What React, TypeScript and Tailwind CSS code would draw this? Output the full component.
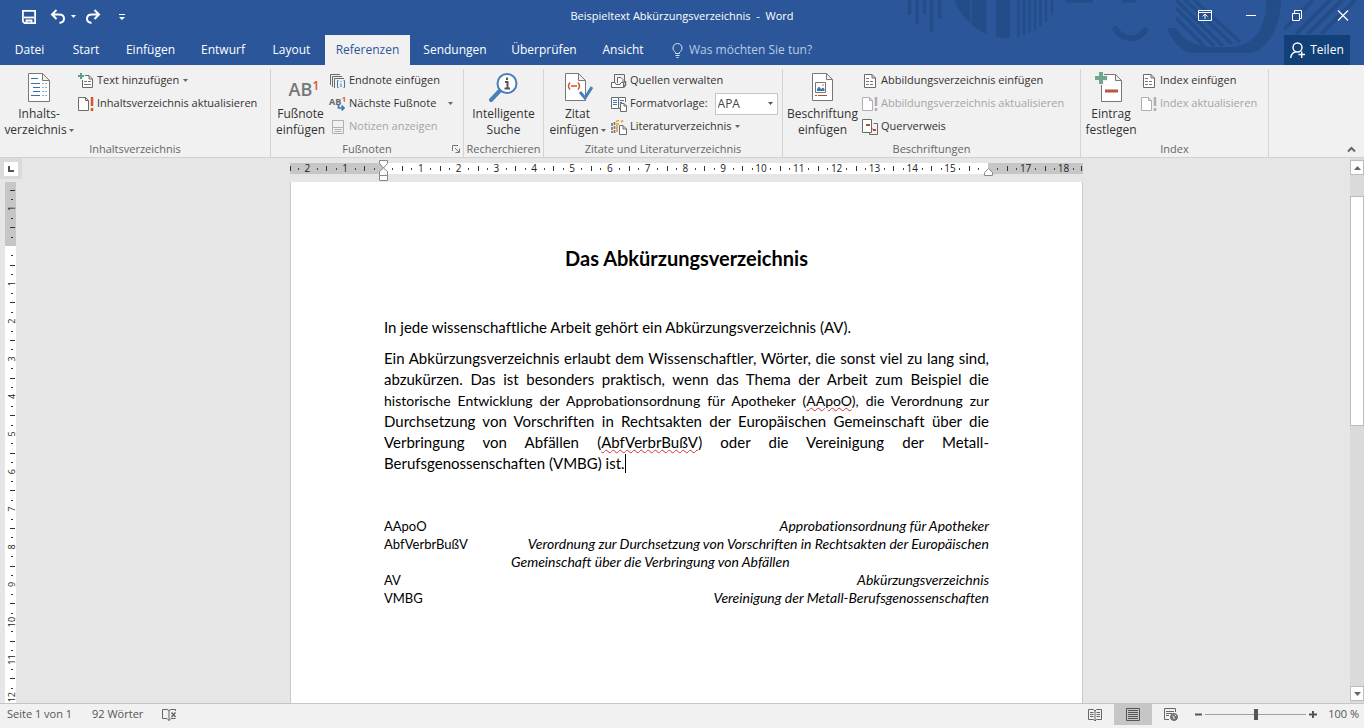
import type { ReactNode } from "react";
import clsx from "clsx";

const CM_X = 37.8;
const CM_Y = 37.6;

const tabs = [
  { title: "Datei", width: "w-[59px]" },
  { title: "Start", width: "w-[54px]" },
  { title: "Einfügen", width: "w-[75px]" },
  { title: "Entwurf", width: "w-[70px]" },
  { title: "Layout", width: "w-[67px]" },
  { title: "Referenzen", width: "w-[85px]", active: true },
  { title: "Sendungen", width: "w-[90px]" },
  { title: "Überprüfen", width: "w-[88px]" },
  { title: "Ansicht", width: "w-[70px]" },
];

const App = () => {
  return (
    <div className="flex h-screen flex-col overflow-hidden bg-[#e6e6e6] font-['Open_Sans','Noto_Sans',sans-serif] text-[11px] text-[#333]">
      <header className="relative shrink-0 bg-[#2b579a] text-white">
        <HeaderPattern />
        <TitleBar />
        <TabBar />
      </header>
      <Ribbon />
      <Workspace />
      <StatusBar />
    </div>
  );
};

const HeaderPattern = () => {
  return (
    <svg
      className="absolute top-0 right-0"
      width="484"
      height="65"
      viewBox="0 0 484 65"
      fill="none"
      stroke="#234d88"
      aria-hidden="true"
    >
      <g strokeWidth="3.5">
        <path d="M29.500 0V15M37 0V24M44.500 0V14M51.500 0V32M59.500 0V19" />
      </g>
      <clipPath id="disc">
        <path d="M74 0H179C174 20 152 38 127 38S84 22 74 0Z" />
      </clipPath>
      <g clipPath="url(#disc)">
        <path d="M82 0V40" strokeWidth="16" />
        <path d="M99 0V40" strokeWidth="15" />
        <path d="M123 0V40" strokeWidth="14" />
        <path
          d="M138.500 0V40M144 0V40M149.500 0V40M155 0V40M160.500 0V40M166 0V40M172 0V40"
          strokeWidth="2.500"
        />
      </g>
      <path d="M185 1H213M242 1H256" strokeWidth="3" />
      <path d="M234 27C243 42 258 42 267 28" strokeWidth="6" />
      <path d="M296 0V28H287C292 42 302 52 313 53H370C388 50 401 25 401 0H386C387 25 376 44 353 47L304 0Z" fill="#234d88" stroke="none" />
      <path d="M296 0V28C306 44 320 47 334 47H354L304 0Z" fill="#2b579a" stroke="none" />
      <path d="M296 8L334 46M296 0L343 46M305 0L352 44M314 0L360 42M296 18L324 46" strokeWidth="3.500" />
      <path d="M404 29L433 0M416 34L450 0M428 34L462 0M441 34L475 0" strokeWidth="4" />
    </svg>
  );
};

const TitleBar = () => {
  return (
    <div className="relative flex h-[35px] items-center justify-center">
      <span className="pb-[2px] text-[11px]">Beispieltext Abkürzungsverzeichnis&nbsp; -&nbsp; Word</span>
      <div className="absolute inset-y-0 left-[21px] flex items-center pb-[2px]">
        <button aria-label="Speichern">
          <svg width="16" height="16" viewBox="0 0 16 16" fill="none" stroke="#fff" strokeWidth="1.800">
            <path d="M1.900 1.900H14.100V14.100H3.500L1.900 12.500Z" />
            <path d="M3 8.500H13" />
            <path d="M5.500 14V11.500H10.500V14" />
          </svg>
        </button>
        <button aria-label="Rückgängig" className="ml-[13px] flex items-center gap-[5px]">
          <svg width="16" height="16" viewBox="0 0 16 16" fill="none" stroke="#fff" strokeWidth="2">
            <path d="M6.500 1L2 5.500L6.500 10M2.500 5.500H9C12.500 5.500 14 7.500 14 9.700C14 12 12.300 13.500 9.500 14" />
          </svg>
          <Caret className="text-white" />
        </button>
        <button aria-label="Wiederholen" className="ml-[9px]">
          <svg width="16" height="16" viewBox="0 0 16 16" fill="none" stroke="#fff" strokeWidth="2">
            <path d="M9.500 1L14 5.500L9.500 10M13.500 5.500H7C3.500 5.500 2 7.500 2 9.700C2 12 3.700 13.500 6.500 14" />
          </svg>
        </button>
        <button aria-label="Symbolleiste anpassen" className="ml-[17px]">
          <svg width="8" height="8" viewBox="0 0 8 8" fill="#fff">
            <path d="M1 1H7V2H1ZM1 4H7L4 7Z" />
          </svg>
        </button>
      </div>
      <div className="absolute inset-y-0 right-[14px] flex items-center gap-[32px] pb-[5px]">
        <button aria-label="Menüband-Anzeigeoptionen">
          <svg width="14" height="11" viewBox="0 0 14 11" fill="none" stroke="#fff">
            <path d="M.5.5H13.500V10.500H.5ZM.5 2.500H13.500M7 9V4M4.500 6.500L7 4L9.500 6.500" />
          </svg>
        </button>
        <button aria-label="Minimieren">
          <svg width="14" height="11" viewBox="0 0 14 11" stroke="#fff">
            <path d="M2 5.500H12" />
          </svg>
        </button>
        <button aria-label="Verkleinern">
          <svg width="14" height="11" viewBox="0 0 14 11" fill="none" stroke="#fff">
            <path d="M2.500 3.500H9.500V10.500H2.500ZM4.500 3.500V.5H11.500V8.500H9.500" />
          </svg>
        </button>
        <button aria-label="Schließen">
          <svg width="14" height="11" viewBox="0 0 14 11" stroke="#fff" strokeWidth="1.200">
            <path d="M2 .5L12 10.500M12 .5L2 10.500" />
          </svg>
        </button>
      </div>
    </div>
  );
};

const TabBar = () => {
  return (
    <div className="relative flex h-[30px] items-stretch pr-[14px]">
      <nav className="flex">
        {tabs.map(({ title, width, active }) => (
          <button
            key={title}
            className={clsx(
              "flex shrink-0 items-center justify-center text-[12px]",
              width,
              active && "bg-[#f1f1f1] text-[#2b579a]",
            )}
          >
            {title}
          </button>
        ))}
      </nav>
      <label className="ml-[13px] flex items-center gap-[5px]">
        <svg width="13" height="15" viewBox="0 0 13 15" fill="none" stroke="#dce5f3">
          <path d="M4.500 10.500V9.500C3 8 2 7 2 5A4.500 4.500 0 0 1 11 5C11 7 10 8 8.500 9.500V10.500ZM4.500 12.500H8.500M5.500 14.500H7.500" />
        </svg>
        <input
          type="text"
          aria-label="Was möchten Sie tun?"
          placeholder="Was möchten Sie tun?"
          className="w-[150px] bg-transparent text-[12px] outline-none placeholder:text-[#bccae2]"
        />
      </label>
      <button className="ml-auto flex w-[66px] items-center justify-center gap-[5px] bg-[#124078] text-[12px]">
        <svg width="15" height="17" viewBox="0 0 15 17" fill="none" stroke="#fff" strokeWidth="1.400">
          <circle cx="7.500" cy="5.500" r="4.500" />
          <path d="M.7 16C1 12.500 3 10.500 5.500 10M8.500 12.500H15M11.700 9.500V16" />
        </svg>
        Teilen
      </button>
    </div>
  );
};

const Caret = ({ className }: { className?: string }) => (
  <svg className={clsx("inline-block shrink-0", className)} width="5" height="3" viewBox="0 0 5 3" fill="currentColor">
    <path d="M0 0H5L2.500 3Z" />
  </svg>
);

const ScrollArrow = ({ className }: { className?: string }) => (
  <svg className={className} width="7" height="4" viewBox="0 0 7 4" fill="#666">
    <path d="M0 0H7L3.500 4Z" />
  </svg>
);

type GroupProps = {
  title: string;
  width: string;
  launcher?: boolean;
  children: ReactNode;
};

const Group = ({ title, width, launcher, children }: GroupProps) => {
  return (
    <section className={clsx("flex shrink-0 flex-col border-r border-[#d4d4d4]", width)}>
      <div className="flex h-[72px]">{children}</div>
      <div className="relative flex h-[16px] items-center justify-center whitespace-nowrap text-[#666]">
        <h2>{title}</h2>
        {launcher && (
          <button aria-label="Fußnoten-Optionen" className="absolute right-[3px]">
            <svg width="8" height="8" viewBox="0 0 8 8" fill="none" stroke="#777">
              <path d="M.5 6V.5H6M3 3L7 7M7.500 3.500V7.500H3.500" />
            </svg>
          </button>
        )}
      </div>
    </section>
  );
};

type BigButtonProps = {
  icon: ReactNode;
  lines: [string, string];
  width: string;
  caret?: boolean;
};

const BigButton = ({ icon, lines, width, caret }: BigButtonProps) => {
  return (
    <button className={clsx("flex shrink-0 flex-col items-center text-[12px] leading-[16px] whitespace-nowrap", width)}>
      <span className="flex h-[37px] items-center">{icon}</span>
      <span>{lines[0]}</span>
      <span className="flex items-center gap-[2px]">
        {lines[1]}
        {caret && <Caret className="text-[#666]" />}
      </span>
    </button>
  );
};

type SmallButtonProps = {
  icon: ReactNode;
  text: string;
  caret?: boolean;
  spacedCaret?: boolean;
  disabled?: boolean;
};

const SmallButton = ({ icon, text, caret, spacedCaret, disabled }: SmallButtonProps) => {
  return (
    <button disabled={disabled} className={clsx("flex h-[23px] items-center whitespace-nowrap", disabled && "text-[#a5a5a5]")}>
      <span className="mr-[3px] flex w-[16px] shrink-0 justify-center">{icon}</span>
      {text}
      {caret && <Caret className={clsx("text-[#666]", spacedCaret ? "ml-[12px]" : "ml-[4px]")} />}
    </button>
  );
};

const Column = ({ children }: { children: ReactNode }) => (
  <div className="flex flex-col items-start">{children}</div>
);

const SmallIcon = ({ children }: { children: ReactNode }) => (
  <svg width="16" height="16" viewBox="0 0 16 16" fill="none" stroke="#6a6a6a">
    {children}
  </svg>
);

const UpdateIcon = ({ color = "#6a6a6a", accent = "#d9532c" }) => (
  <SmallIcon>
    <path d="M.5 1.500H7.500L10.500 4.500V14.500H.5ZM7.500 1.500V4.500H10.500" fill="#fff" stroke={color} />
    <path d="M14 1V10M14 12V15" stroke={accent} strokeWidth="2.500" />
  </SmallIcon>
);

const ListPageIcon = () => (
  <SmallIcon>
    <path d="M2.500 1.500H10L13.500 5V14.500H2.500ZM10 1.500V5H13.500" fill="#fff" />
    <path d="M4 5.500H8M4 8.500H12M4 11.500H12" stroke="#777" strokeDasharray="3 1" />
  </SmallIcon>
);

const Ribbon = () => {
  return (
    <div className="flex h-[93px] shrink-0 border-b border-[#d2d2d2] bg-[#f1f1f1] pt-[4px]">
      <Group title="Inhaltsverzeichnis" width="w-[271px]">
        <BigButton
          width="w-[78px]"
          lines={["Inhalts-", "verzeichnis"]}
          caret
          icon={
            <svg width="22" height="29" viewBox="0 0 22 29" fill="none" stroke="#777">
              <path d="M.5.5H14.500L21.500 7.500V28.500H.5ZM14.500.5V7.500H21.500" fill="#fff" />
              <path d="M3 5.500H10M3 10.500H12M5 14.500H12M5 18.500H12M3 22.500H12" stroke="#3a6ea5" />
              <path d="M14 10.500H19M14 14.500H19M14 18.500H19M14 22.500H19" stroke="#8fb0d0" strokeDasharray="2 1" />
            </svg>
          }
        />
        <Column>
          <SmallButton
            text="Text hinzufügen"
            caret
            icon={
              <SmallIcon>
                <path d="M4.500 7V14.500H14.500V6L11 2.500H7M11 2.500V6H14.500" fill="#fff" />
                <path d="M6 8.500H9M10 8.500H13M6 11.500H13" stroke="#777" />
                <path d="M3 0V6M0 3H6" stroke="#5aa182" strokeWidth="2" />
              </SmallIcon>
            }
          />
          <SmallButton text="Inhaltsverzeichnis aktualisieren" icon={<UpdateIcon />} />
        </Column>
      </Group>

      <Group title="Fußnoten" width="w-[193px]" launcher>
        <BigButton
          width="w-[59px]"
          lines={["Fußnote", "einfügen"]}
          icon={
            <span className="relative pt-[3px] text-[18px] font-semibold text-[#777]">
              AB
              <sup className="absolute -right-[7px] top-[2px] text-[12px] leading-none text-[#d9532c]">1</sup>
            </span>
          }
        />
        <Column>
          <SmallButton
            text="Endnote einfügen"
            icon={
              <SmallIcon>
                <path d="M.5 12V1.500H10M2.500 14V3.500H12M4.500 15V5.500H14" />
                <path d="M8.500 7.500H7.500V14.500H8.500M13.500 7.500H14.500V14.500H13.500M11 8V9M11 10.500V14" stroke="#3a78b5" />
              </SmallIcon>
            }
          />
          <SmallButton
            text="Nächste Fußnote"
            caret
            spacedCaret
            icon={
              <svg width="16" height="16" viewBox="0 0 16 16" fill="none" className="overflow-visible">
                <text x="-1" y="9" fontSize="9" fontWeight="700" fill="#666">AB</text>
                <text x="12" y="6" fontSize="7" fontWeight="700" fill="#d9532c">1</text>
                <path d="M8.500 9V12H14M11.500 9.500L14 12L11.500 14.500" stroke="#3a78b5" strokeWidth="1.700" />
              </svg>
            }
          />
          <SmallButton
            text="Notizen anzeigen"
            disabled
            icon={
              <SmallIcon>
                <path d="M2.500 1.500H13.500V14.500H2.500ZM2.500 8.500H13.500M4.500 10.500H11.500M4.500 12.500H11.500" stroke="#b5adb5" />
              </SmallIcon>
            }
          />
        </Column>
      </Group>

      <Group title="Recherchieren" width="w-[80px]">
        <BigButton
          width="w-full"
          lines={["Intelligente", "Suche"]}
          icon={
            <svg width="29" height="29" viewBox="0 0 29 29" fill="none" stroke="#4a7ebb">
              <path d="M2 27L11 17.500" strokeWidth="4" strokeLinecap="round" />
              <circle cx="18" cy="10.500" r="9.500" fill="#fff" strokeWidth="2" />
              <path d="M16 9H18.500V15M15.500 15.500H21M18 4.500V7" stroke="#555" strokeWidth="2" />
            </svg>
          }
        />
      </Group>

      <Group title="Zitate und Literaturverzeichnis" width="w-[239px]">
        <BigButton
          width="w-[67px]"
          lines={["Zitat", "einfügen"]}
          caret
          icon={
            <svg width="28" height="29" viewBox="0 0 28 29" fill="none" stroke="#777" className="ml-[3px]">
              <path d="M.5.5H13.500L20.500 7.500V27.500H.5ZM13.500.5V7.500H20.500" fill="#fff" />
              <path d="M5 9.500Q2 13 5 16.500M13 9.500Q16 13 13 16.500M6 13H12" stroke="#d05a28" strokeWidth="1.500" />
              <path d="M15 19L20 25L27 14" stroke="#4a7ebb" strokeWidth="3" />
            </svg>
          }
        />
        <Column>
          <SmallButton
            text="Quellen verwalten"
            icon={
              <SmallIcon>
                <path d="M3.500 9.500V1.500H13.500V9.500" />
                <path d="M6.500 10V4.500H10L12 6.500V10" fill="#fff" />
                <path d="M.5 9.500H4L5 11.500H9L10 9.500H12.500V14.500H.5Z" fill="#fff" />
                <path d="M14.500 8V12L12.500 14.500" strokeWidth="1.500" />
              </SmallIcon>
            }
          />
          <div className="flex h-[23px] items-center">
            <span className="mr-[3px]">
              <SmallIcon>
                <path d="M.5 1.500H7.500V12.500H.5ZM7.500 1.500H14.500V6M7.500 12.500H9" fill="#fff" />
                <path d="M2 4.500H6M2 6.500H6M2 8.500H6M9 4.500H13M9 6.500H11" stroke="#3a78b5" />
                <path d="M9.500 7.500H13L15.500 10V15.500H9.500ZM13 7.500V10H15.500" fill="#fff" />
              </SmallIcon>
            </span>
            <label htmlFor="citation-style">Formatvorlage:</label>
            <span className="relative ml-[7px] flex">
              <select
                id="citation-style"
                className="h-[22px] w-[63px] appearance-none border border-[#c6c6c6] bg-white pl-[2px] text-[12px] text-[#444]"
              >
                <option>APA</option>
              </select>
              <Caret className="pointer-events-none absolute top-[9px] right-[5px] text-[#555]" />
            </span>
          </div>
          <SmallButton
            text="Literaturverzeichnis"
            caret
            icon={
              <SmallIcon>
                <path d="M1 4V14M3.500 3V14" stroke="#777" strokeWidth="1.700" strokeDasharray="3 1" />
                <path d="M5 2.500L8 1.500M5 5H8M10 3L12 1.500M6 6V13" stroke="#e0a33c" strokeWidth="1.700" />
                <path d="M8.500 6.500H12L15.500 10V15.500H8.500ZM12 6.500V10H15.500" fill="#fff" />
              </SmallIcon>
            }
          />
        </Column>
      </Group>

      <Group title="Beschriftungen" width="w-[298px]">
        <BigButton
          width="w-[79px]"
          lines={["Beschriftung", "einfügen"]}
          icon={
            <svg width="22" height="29" viewBox="0 0 22 29" fill="none" stroke="#777">
              <path d="M.5.5H14.500L20.500 6.500V27.500H.5ZM14.500.5V6.500H20.500" fill="#fff" />
              <path d="M3.500 9.500H13.500V19.500H3.500Z" />
              <path d="M5 18V16L7 13.500L9 16L11 14.500L12.500 16V18Z" fill="#3a78b5" stroke="none" />
              <circle cx="11" cy="12" r="1" fill="#e0a33c" stroke="none" />
              <path d="M3 22.500H5M6 22.500H15" stroke="#b5482b" />
            </svg>
          }
        />
        <Column>
          <SmallButton text="Abbildungsverzeichnis einfügen" icon={<ListPageIcon />} />
          <SmallButton
            text="Abbildungsverzeichnis aktualisieren"
            disabled
            icon={<UpdateIcon color="#b5adb5" accent="#b5adb5" />}
          />
          <SmallButton
            text="Querverweis"
            icon={
              <SmallIcon>
                <path d="M.5.5H9.500V13.500H.5Z" fill="#fff" />
                <path d="M11.500 4.500H15.500V15.500H7.500V13.500M9.500 10H11" />
                <path d="M4 6H8M11 11H14" stroke="#c0492b" strokeWidth="2" />
              </SmallIcon>
            }
          />
        </Column>
      </Group>

      <Group title="Index" width="w-[188px]">
        <BigButton
          width="w-[60px]"
          lines={["Eintrag", "festlegen"]}
          icon={
            <svg width="34" height="31" viewBox="0 0 34 31" fill="none" stroke="#777">
              <path d="M7.500 2.500H21.500L27.500 8.500V29.500H7.500ZM21.500 2.500V8.500H27.500" fill="#fff" />
              <path d="M11 19H24" stroke="#b9573a" strokeWidth="3" />
              <path d="M7 0V13M0 6.500H14" stroke="#f1f1f1" strokeWidth="6" />
              <path d="M7 0V12M1 6H13" stroke="#6ea78b" strokeWidth="4" />
            </svg>
          }
        />
        <Column>
          <SmallButton text="Index einfügen" icon={<ListPageIcon />} />
          <SmallButton text="Index aktualisieren" disabled icon={<UpdateIcon color="#b5adb5" accent="#b5adb5" />} />
        </Column>
      </Group>

      <button aria-label="Menüband reduzieren" className="mt-auto mr-[8px] mb-[4px] ml-auto">
        <svg width="9" height="7" viewBox="0 0 9 7" fill="none" stroke="#666" strokeWidth="2">
          <path d="M1 5.500L4.500 2L8 5.500" />
        </svg>
      </button>
    </div>
  );
};

// Quarter-centimetre steps between two ruler positions, zero sits on the margin.
const quarters = (from: number, to: number) =>
  Array.from({ length: to - from + 1 }, (_, i) => from + i).filter((q) => q !== 0);

const HorizontalRuler = () => {
  return (
    <svg className="mx-auto block" width="793" height="22" viewBox="0 0 793 22">
      <rect y="3" width="793" height="11" fill="#c6c6c6" />
      <rect x="93" y="3" width="605" height="11" fill="#fff" />
      {quarters(-9, 73).map((q) => {
        const x = 93 + (q * CM_X) / 4;
        if (q % 4 === 0) {
          if (q === 64) return null;
          return (
            <text key={q} x={x} y="12" fontSize="10" textAnchor="middle" fill="#222">
              {Math.abs(q / 4)}
            </text>
          );
        }
        return q % 2 === 0 ? (
          <rect key={q} x={Math.round(x)} y="6" width="1" height="5" fill="#333" />
        ) : (
          <rect key={q} x={Math.round(x)} y="8" width="1" height="2" fill="#444" />
        );
      })}
      <path d="M.5 6V11M791.500 6V11" stroke="#333" />
      <g fill="#fff" stroke="#888">
        <path d="M89.500.5H97.500V3.500L93.500 8L89.500 3.500ZM93.500 8L97.500 11.500V15.500H89.500V11.500ZM89.500 15.500H97.500V20.500H89.500Z" />
        <path d="M698.500 8.500L702.500 12.500V15.500H694.500V12.500Z" />
      </g>
    </svg>
  );
};

const VerticalRuler = () => {
  return (
    <svg className="ml-[5px] block" width="18" height="521" viewBox="0 0 18 521">
      <rect width="11" height="64" fill="#c6c6c6" />
      <rect y="64" width="11" height="457" fill="#fff" />
      {quarters(-6, 48).map((q) => {
        const y = 64 + (q * CM_Y) / 4;
        if (q % 4 === 0) {
          return (
            <text
              key={q}
              fontSize="9"
              textAnchor="middle"
              fill="#222"
              transform={`translate(10 ${y}) rotate(-90)`}
            >
              {Math.abs(q / 4)}
            </text>
          );
        }
        return q % 2 === 0 ? (
          <rect key={q} x="5" y={Math.round(y)} width="5" height="1" fill="#333" />
        ) : (
          <rect key={q} x="6" y={Math.round(y)} width="2" height="1" fill="#333" />
        );
      })}
    </svg>
  );
};

const Workspace = () => {
  return (
    <div className="flex min-h-0 flex-1">
      <aside className="w-[23px] shrink-0 overflow-hidden">
        <div className="mb-[3px] flex h-[21px] w-[22px] items-center justify-center bg-[#dadada]">
          <button aria-label="Tabstopp links" className="flex size-[14px] items-center justify-center bg-white">
            <svg width="6" height="6" viewBox="0 0 6 6" fill="none" stroke="#555" strokeWidth="2">
              <path d="M1 0V5H6" />
            </svg>
          </button>
        </div>
        <VerticalRuler />
      </aside>
      <main className="flex min-w-0 flex-1 flex-col overflow-hidden pt-[2px]">
        <HorizontalRuler />
        <Page />
      </main>
      <ScrollBar />
    </div>
  );
};

const ScrollBar = () => {
  return (
    <div className="flex w-[14px] shrink-0 flex-col bg-[#dadada] pt-[2px] pb-[2px]">
      <button aria-label="Nach oben" className="flex h-[15px] items-center justify-center border border-[#bbb] bg-white">
        <ScrollArrow className="rotate-180" />
      </button>
      <div className="flex-1 pt-[21px]">
        <div className="h-[230px] border border-[#bbb] bg-white" />
      </div>
      <button aria-label="Nach unten" className="flex h-[15px] items-center justify-center border border-[#bbb] bg-white">
        <ScrollArrow />
      </button>
    </div>
  );
};

const Misspelled = ({ children }: { children: ReactNode }) => (
  <span className="underline decoration-[#d03438] decoration-wavy decoration-1 underline-offset-1">{children}</span>
);

const Line = ({ tight, children }: { tight?: boolean; children: ReactNode }) => (
  <span className={clsx("block whitespace-nowrap [text-align-last:justify]", tight && "text-[14px]")}>{children}</span>
);

const Page = () => {
  return (
    <article className="mx-auto w-[793px] flex-1 overflow-hidden border-x border-[#c8c8c8] bg-white px-[93px] pt-[64px] font-[Lato,sans-serif] text-[15px] leading-[21px] text-black [font-variant-ligatures:none]">
      <h1 className="text-center text-[20px] leading-[24px] font-bold">Das Abkürzungsverzeichnis</h1>
      <p className="mt-[47px]">In jede wissenschaftliche Arbeit gehört ein Abkürzungsverzeichnis (AV).</p>
      <p className="mt-[10px]">
        <Line>Ein Abkürzungsverzeichnis erlaubt dem Wissenschaftler, Wörter, die sonst viel zu lang sind,</Line>
        <Line>abzukürzen. Das ist besonders praktisch, wenn das Thema der Arbeit zum Beispiel die</Line>
        <Line tight>
          historische Entwicklung der Approbationsordnung für Apotheker (<Misspelled>AApoO</Misspelled>), die Verordnung zur
        </Line>
        <Line>Durchsetzung von Vorschriften in Rechtsakten der Europäischen Gemeinschaft über die</Line>
        <Line>
          Verbringung von Abfällen (<Misspelled>AbfVerbrBußV</Misspelled>) oder die Vereinigung der Metall-
        </Line>
        <span className="flex items-center">
          Berufsgenossenschaften (VMBG) ist.
          <span className="h-[19px] w-px bg-black" />
        </span>
      </p>
      <dl className="mt-[43px] grid grid-cols-[127px_1fr] leading-[18px] whitespace-nowrap [&>dd]:text-right [&>dd]:text-[14px] [&>dd]:italic [&>dt]:text-[13px]">
        <dt>AApoO</dt>
        <dd>Approbationsordnung für Apotheker</dd>
        <dt>AbfVerbrBußV</dt>
        <dd>
          Verordnung zur Durchsetzung von Vorschriften in Rechtsakten der Europäischen
          <span className="block text-left">Gemeinschaft über die Verbringung von Abfällen</span>
        </dd>
        <dt>AV</dt>
        <dd>Abkürzungsverzeichnis</dd>
        <dt>VMBG</dt>
        <dd>Vereinigung der Metall-Berufsgenossenschaften</dd>
      </dl>
    </article>
  );
};

const StatusBar = () => {
  return (
    <footer className="flex h-[25px] shrink-0 items-center border-t border-[#c6c6c6] bg-[#f1f1f1] pr-[5px] pb-[3px] pl-[7px] text-[11px] text-[#555]">
      <span className="w-[85px]">Seite 1 von 1</span>
      <span className="w-[70px]">92 Wörter</span>
      <button aria-label="Rechtschreibprüfung">
        <svg width="15" height="13" viewBox="0 0 15 13" fill="none" stroke="#666">
          <path d="M7 2.500L5 1.500H.5V10.500H5L7 12.500ZM7 2.500L9 1.500H13.500V3M7 12.500L9 10.500H13.500" />
          <path d="M9.500 4.500L13.500 9M13.500 4.500L9.500 9" strokeWidth="1.500" />
        </svg>
      </button>
      <div className="ml-auto flex h-full items-center">
        <button aria-label="Lesemodus" className="flex w-[38px] justify-center">
          <svg width="14" height="12" viewBox="0 0 14 12" fill="none" stroke="#666">
            <path d="M7 2L5.500.5H.5V10.500H5.500L7 12L8.500 10.500H13.500V.5H8.500ZM7 2V12M2 3.500H5.500M2 5.500H5.500M2 7.500H5.500M8.500 3.500H12M8.500 5.500H12M8.500 7.500H12" />
          </svg>
        </button>
        <button aria-label="Seitenlayout" className="flex h-full w-[38px] items-center justify-center bg-[#c6c6c6]">
          <svg width="14" height="13" viewBox="0 0 14 13" fill="none" stroke="#555">
            <path d="M.5.5H13.500V12.500H.5ZM2 2.500H12M2 4.500H12M2 6.500H12M2 8.500H12M2 10.500H12" />
          </svg>
        </button>
        <button aria-label="Weblayout" className="flex w-[38px] justify-center">
          <svg width="14" height="13" viewBox="0 0 14 13" fill="none" stroke="#666">
            <path d="M5 11.500H.5V.5H11.500V4M2 3.500H10M2 5.500H8M2 7.500H5" />
            <circle cx="10" cy="9" r="3.500" fill="#777" />
            <path d="M8.500 8L10 9V11M11 6.500L12 8" stroke="#f1f1f1" />
          </svg>
        </button>
        <button aria-label="Verkleinern" className="ml-[5px] flex">
          <svg width="7" height="7" viewBox="0 0 7 7" stroke="#555" strokeWidth="2">
            <path d="M0 3.500H7" />
          </svg>
        </button>
        <input
          type="range"
          aria-label="Zoom"
          min={10}
          max={190}
          defaultValue={100}
          className="mx-[3px] h-[12px] w-[101px] appearance-none bg-transparent bg-[linear-gradient(#a0a0a0,#a0a0a0)] bg-[length:100%_1px] bg-center bg-no-repeat [&::-webkit-slider-thumb]:h-[11px] [&::-webkit-slider-thumb]:w-[4px] [&::-webkit-slider-thumb]:appearance-none [&::-webkit-slider-thumb]:bg-[#555]"
        />
        <button aria-label="Vergrößern" className="flex">
          <svg width="8" height="7" viewBox="0 0 8 7" stroke="#555" strokeWidth="2">
            <path d="M0 3.500H8M4 0V7" />
          </svg>
        </button>
        <span className="ml-[11px]">100 %</span>
      </div>
    </footer>
  );
};

export default App;
